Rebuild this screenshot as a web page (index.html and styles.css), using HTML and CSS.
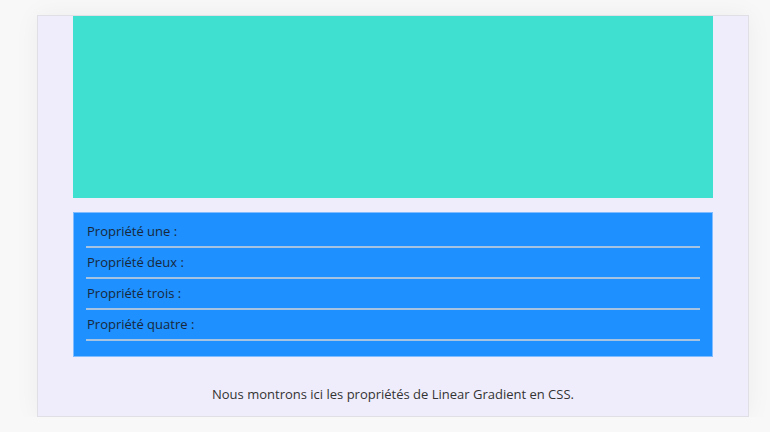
FILE: index.html
```html
<!DOCTYPE html>
<html lang="fr">
<head>
<meta charset="utf-8">
<title>Linear Gradient</title>
<link rel="stylesheet" href="styles.css">
</head>
<body>
<div class="wrap">
  <div class="hero"></div>
  <div class="props">
    <div class="row">Propriété une :</div>
    <div class="row">Propriété deux :</div>
    <div class="row">Propriété trois :</div>
    <div class="row">Propriété quatre :</div>
  </div>
  <p class="note">Nous montrons ici les propriétés de Linear Gradient en CSS.</p>
</div>
</body>
</html>
```
FILE: styles.css
```css
html, body {
  margin: 0;
  padding: 0;
}
body {
  background: #f8f8f8;
  font-family: "Open Sans", "DejaVu Sans", sans-serif;
  font-size: 13px;
  line-height: 18px;
  padding: 15px 0 0 37px;
}
.wrap {
  box-sizing: border-box;
  width: 712px;
  background: #efedfb;
  border: 1px solid #e0dfe6;
  padding: 0 35px 13px 35px;
  box-shadow: 0 0 24px rgba(0, 0, 0, 0.05);
}
.hero {
  height: 182px;
  background: #40e0d0;
}
.props {
  box-sizing: border-box;
  margin-top: 14px;
  height: 145px;
  background: #1e90ff;
  border: 1px solid #80bcff;
  padding: 4px 12px 0 12px;
  color: #18283a;
}
.row {
  padding: 5px 0 6px 1px;
  border-bottom: 2px solid #a6c3e2;
}
.note {
  margin: 28px 0 0 0;
  text-align: center;
  color: #333;
}
```
